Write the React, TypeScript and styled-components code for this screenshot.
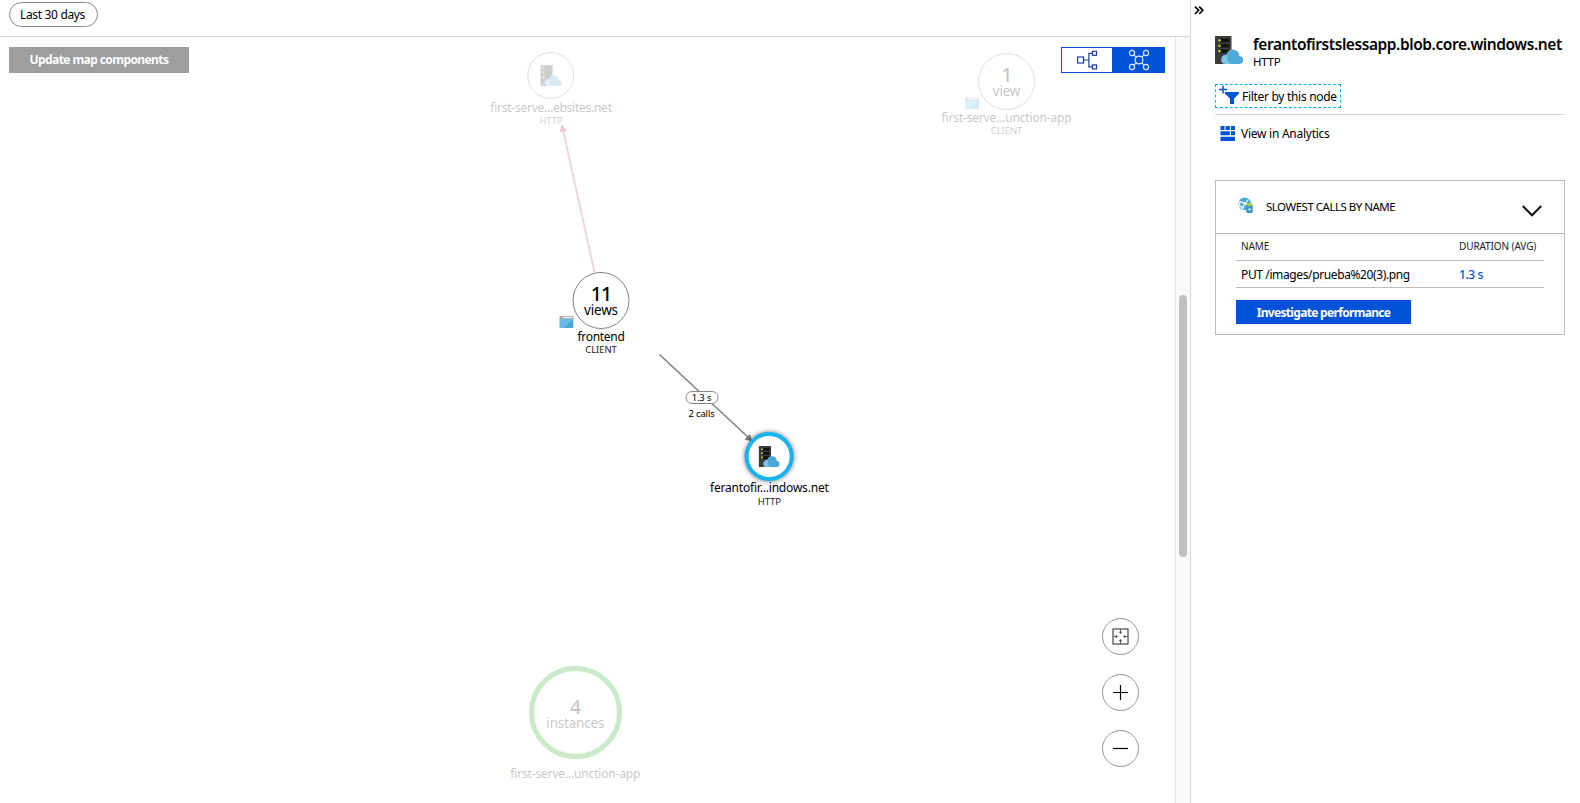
import React from "react";
import styled, { createGlobalStyle, css } from "styled-components";

const blue = "#0052d9";
const cyan = "#17b5f0";

const Global = createGlobalStyle`
  * { box-sizing: border-box; }
  body { margin: 0; background: #fff; overflow: hidden; }
`;

const Page = styled.div`
  display: flex;
  width: 1580px;
  height: 803px;
  overflow: hidden;
  color: #000;
  font: 12px/16px "Noto Sans", "Open Sans", sans-serif;
  letter-spacing: -0.3px;
  white-space: nowrap;
`;

const Main = styled.main`
  display: flex;
  flex-direction: column;
  width: 1190px;
`;

const TopBar = styled.header`
  height: 37px;
  padding: 2px 9px;
  border-bottom: 1px solid #d6d6d6;
`;

const TimePill = styled.button`
  display: block;
  width: 89px;
  height: 25px;
  padding: 0 2px 0 0;
  border: 1px solid #8a8a8a;
  border-radius: 13px;
  background: #fff;
  color: #000;
  font: inherit;
  letter-spacing: -0.33px;
`;

const Workspace = styled.div`
  display: flex;
  flex: 1;
  min-height: 0;
`;

const MapArea = styled.section`
  position: relative;
  display: flex;
  justify-content: space-between;
  align-items: flex-start;
  width: 1175px;
  padding: 10px 10px 0 9px;
`;

const SolidButton = styled.button<{ $bg: string; $w: number; $h: number; $ls: number; $drop?: number }>`
  display: block;
  width: ${(p) => p.$w}px;
  height: ${(p) => p.$h}px;
  padding: ${(p) => p.$drop ?? 0}px 0 0;
  border: 0;
  background: ${(p) => p.$bg};
  color: #fff;
  font: 700 12px/16px "Noto Sans", sans-serif;
  letter-spacing: ${(p) => p.$ls}px;
`;

const Toggle = styled.div`
  display: flex;
  width: 104px;
  height: 26px;
  border: 1px solid ${blue};
`;

const ToggleHalf = styled.button<{ $on?: boolean }>`
  width: ${(p) => (p.$on ? 52 : 50)}px;
  display: flex;
  align-items: center;
  justify-content: center;
  padding: 0 0 0 ${(p) => (p.$on ? 2 : 0)}px;
  border: 0;
  background: ${(p) => (p.$on ? blue : "#fff")};
`;

const Edges = styled.svg`
  position: absolute;
  inset: 0;
  pointer-events: none;
`;

const Node = styled.div<{ $x: number; $y: number; $dim?: boolean }>`
  position: absolute;
  left: ${(p) => p.$x}px;
  top: ${(p) => p.$y}px;
  transform: translateX(-50%);
  display: flex;
  flex-direction: column;
  align-items: center;
  opacity: ${(p) => (p.$dim ? 0.22 : 1)};
`;

const Circle = styled.div<{ $d: number; $border?: string; $glow?: boolean; $drop?: number }>`
  display: flex;
  flex-direction: column;
  align-items: center;
  justify-content: center;
  width: ${(p) => p.$d}px;
  height: ${(p) => p.$d}px;
  padding-top: ${(p) => p.$drop ?? 0}px;
  border: ${(p) => p.$border ?? "1px solid #707070"};
  border-radius: 50%;
  background: #fff;
  ${(p) => p.$glow && css`box-shadow: 0 0 5px rgba(0, 0, 0, 0.55);`}
`;

const Count = styled.div`
  font-size: 19.5px;
  line-height: 19px;
  letter-spacing: -0.8px;
  font-weight: 500;
`;

const Caption = styled.div`
  font-size: 13.5px;
  line-height: 15px;
  letter-spacing: -0.2px;
`;

const Label = styled.div<{ $gap?: number; $ls?: number }>`
  margin-top: ${(p) => p.$gap ?? 0}px;
  line-height: 15px;
  letter-spacing: ${(p) => p.$ls ?? -0.17}px;
`;

const Kind = styled.div<{ $gap?: number }>`
  margin-top: ${(p) => p.$gap ?? 0}px;
  font-size: 9.5px;
  line-height: 12px;
  letter-spacing: -0.1px;
  color: #222;
`;

const BrowserBadge = styled.svg<{ $x: number }>`
  position: absolute;
  left: ${(p) => p.$x}px;
  top: 44px;
`;

const EdgeInfo = styled.div`
  position: absolute;
  left: 701.5px;
  top: 354px;
  transform: translateX(-50%);
  display: flex;
  flex-direction: column;
  align-items: center;
  font-size: 9.5px;
  line-height: 11px;
  letter-spacing: -0.15px;
`;

const EdgePill = styled.div`
  width: 33px;
  height: 13px;
  margin-bottom: 4px;
  border: 1px solid #888;
  border-radius: 7px;
  background: #fff;
  text-align: center;
`;

const ZoomStack = styled.div`
  position: absolute;
  right: 36px;
  bottom: 36px;
  display: flex;
  flex-direction: column;
  gap: 19px;
`;

const RoundButton = styled.button`
  display: flex;
  align-items: center;
  justify-content: center;
  width: 37px;
  height: 37px;
  padding: 0;
  border: 1px solid #999;
  border-radius: 50%;
  background: #fff;
`;

const ScrollTrack = styled.div`
  width: 15px;
  padding: 258px 0 0 3px;
  border-left: 1px solid #e6e6e6;
  background: #fafafa;
`;

const ScrollThumb = styled.div`
  width: 8px;
  height: 262px;
  border-radius: 4px;
  background: #c1c1c1;
`;

const Panel = styled.aside`
  width: 390px;
  padding: 0 15px 0 24px;
  border-left: 1px solid #d6d6d6;
`;

const Collapse = styled.div`
  height: 34px;
  margin-left: -21px;
  padding-top: 6px;
  svg { display: block; }
`;

const Heading = styled.div`
  display: flex;
  gap: 10px;
  height: 50px;
  > svg { margin-top: 2px; }
`;

const Title = styled.h1`
  margin: 0;
  font-size: 15.5px;
  line-height: 20px;
  font-weight: 600;
  letter-spacing: -0.43px;
`;

const Subtitle = styled.div`
  font-size: 11.5px;
  line-height: 15px;
`;

const FilterRow = styled.div`
  height: 31px;
  border-bottom: 1px solid #d6d6d6;
`;

const FilterLink = styled.a`
  display: flex;
  align-items: flex-start;
  gap: 3px;
  width: 126px;
  height: 24px;
  padding-left: 3px;
  border: 1px dashed #10aeef;
  span { margin-top: 4px; }
`;

const AnalyticsLink = styled.a`
  display: flex;
  align-items: center;
  gap: 6px;
  height: 65px;
  padding: 0 0 28px 5px;
  letter-spacing: -0.26px;
`;

const Card = styled.section`
  height: 155px;
  border: 1px solid #bdbdbd;
`;

const CardHeader = styled.div`
  display: flex;
  align-items: center;
  height: 53px;
  padding: 0 22px;
  border-bottom: 1px solid #bdbdbd;
  > svg:first-child { margin-bottom: 4px; }
  > svg:last-child { margin-top: 7px; }
`;

const CardTitle = styled.div`
  flex: 1;
  margin-left: 12px;
  font-size: 11.5px;
  letter-spacing: -0.5px;
`;

const CardBody = styled.div`
  padding: 0 20px;
`;

const TableRow = styled.div<{ $head?: boolean }>`
  display: grid;
  grid-template-columns: 218px 1fr;
  align-items: center;
  height: 27px;
  padding: 2px 0 0 5px;
  border-bottom: 1px solid #bdbdbd;
  letter-spacing: -0.38px;
  ${(p) => p.$head && css`
    padding: 0 0 2px 5px;
    font-size: 10px;
    letter-spacing: -0.1px;
    color: #222;
  `}
`;

const Duration = styled.span`
  color: ${blue};
  font-weight: 500;
`;

const CardAction = styled.div`
  padding-top: 12px;
`;

const ServerIcon = ({ size }: { size: number }) => (
  <svg width={size} height={size} viewBox="0 0 28 28">
    <rect width="16.5" height="28" rx="0.8" fill="#3b3b3d" />
    {[2.6, 8, 13.4].map((y) => (
      <g key={y}>
        <rect x="2.6" y={y} width="12" height="3.6" rx="1.6" fill="#111" />
        <circle cx="4.4" cy={y + 1.8} r="1.4" fill="#b4d42a" />
      </g>
    ))}
    <path d="M10 28a4.6 4.6 0 0 1 .6-9.1 3.7 3.7 0 0 1 1-.7 6.5 6.5 0 0 1 12.700 1.800A4 4 0 0 1 24.100 28Z" fill="#4fa9d6" />
    <path d="M10 28a4.6 4.6 0 0 1 .6-9.1 3.700 3.700 0 0 1 2-.4C11.600 21.500 12.500 25.500 15.500 28Z" fill="#7cc4e4" />
  </svg>
);

const BrowserIcon = ({ x }: { x: number }) => (
  <BrowserBadge $x={x} width="14" height="12" viewBox="0 0 14 12">
    <rect width="14" height="12" fill="#4aa8d8" />
    <path d="M0 3h14L4 12H0Z" fill="#69bbe1" />
    <rect width="14" height="3" fill="#a4a7aa" />
    <rect x="3.5" y="0.8" width="9.5" height="1.4" fill="#f2f2f2" />
  </BrowserBadge>
);

const TreeIcon = () => (
  <svg width="22" height="20" viewBox="0 0 22 20" fill="none" stroke="#1b3fa6" strokeWidth="1.2">
    <rect x="1.6" y="7" width="6" height="6" />
    <path d="M7.6 10H12.9M16.5 3.3H12.9V16.9H16.5" />
    <rect x="16.5" y="1.3" width="4" height="4" />
    <rect x="16.5" y="14.9" width="4" height="4" />
  </svg>
);

const MeshIcon = () => (
  <svg width="22" height="22" viewBox="0 0 22 22" fill="none" stroke="#dfe9ff" strokeWidth="1.2">
    <circle cx="11" cy="11" r="3.9" />
    {[[4, 4], [18, 4], [4, 18], [18, 18]].map(([x, y]) => (
      <circle key={`${x}-${y}`} cx={x} cy={y} r="2.6" />
    ))}
    <path d="M5.9 5.9 8.2 8.2M16.1 5.9 13.8 8.2M5.9 16.1 8.2 13.8M16.1 16.1 13.8 13.8" />
  </svg>
);

const FitIcon = () => (
  <svg width="17" height="17" viewBox="0 0 17 17">
    <rect x="1" y="1" width="15" height="15" fill="none" stroke="#222" />
    <path d="M8.5 1v4M8.5 12v4M1 8.5h4M12 8.5h4" stroke="#666" />
    <path d="M6.8 3.8h3.4L8.5 6ZM6.8 13.2h3.4L8.5 11ZM3.8 6.8v3.4L6 8.5ZM13.2 6.8v3.4L11 8.5Z" fill="#444" />
  </svg>
);

const SignIcon = ({ plus }: { plus?: boolean }) => (
  <svg width="17" height="17" viewBox="0 0 17 17" stroke="#000" strokeWidth="1.2">
    <path d={plus ? "M1 8.5H16M8.5 1V16" : "M1 8.5H16"} />
  </svg>
);

const FilterIcon = () => (
  <svg width="20" height="20" viewBox="0 0 20 20">
    <path d="M4 0.5V8.5M0 4.5H8" stroke={blue} strokeWidth="1.5" />
    <path d="M5.8 7H20V8.5L15 13.5V19H11V13.5L5.8 8.500Z" fill={blue} />
  </svg>
);

const AnalyticsIcon = () => (
  <svg width="15" height="15" viewBox="0 0 15 15" fill={blue}>
    <path d="M0.500 0h4v4H0.500ZM5.600 0h4.200v4H5.600ZM10.900 0H15v4H10.900ZM0.500 5.300h9.300v4H0.500ZM10.900 5.300H15v4H10.900ZM0.500 10.800H15V15H0.500Z" />
  </svg>
);

const GlobeIcon = () => (
  <svg width="16" height="17" viewBox="0 0 16 17">
    <circle cx="6.8" cy="6.8" r="6.3" fill="#4da9d8" />
    <path d="M2 4.5 7 6.5 10.5 2.5M7 6.5 4.5 11M7 6.5 12 8M2 4.5 1.5 8.5 4.5 11" stroke="#fff" fill="none" strokeWidth="1.1" />
    <circle cx="7" cy="6.5" r="1.6" fill="#fff" />
    <circle cx="4.5" cy="10.8" r="1.3" fill="#e6f4fb" />
    <path d="M8.3 7.8h6.4v7.6q-3.2 1.6-6.4 0Z" fill="#3c93c6" />
    <ellipse cx="11.5" cy="7.6" rx="3.2" ry="1.3" fill="#b5d334" />
    <path d="M10 12.3h2.5M11.5 11l1.3 1.3-1.3 1.3" stroke="#e6f4fb" fill="none" />
  </svg>
);

export default function App() {
  return (
    <Page>
      <Global />
      <Main>
        <TopBar>
          <TimePill>Last 30 days</TimePill>
        </TopBar>
        <Workspace>
          <MapArea>
            <SolidButton $bg="#9e9e9e" $w={180} $h={26} $ls={-0.58}>Update map components</SolidButton>
            <Toggle>
              <ToggleHalf><TreeIcon /></ToggleHalf>
              <ToggleHalf $on><MeshIcon /></ToggleHalf>
            </Toggle>
            <Edges width="1175" height="766" viewBox="0 37 1175 766">
              <path d="M594.5 272 563 130" stroke="#f0d2d4" strokeWidth="1.7" />
              <path d="M561.5 124 559.8 132.3 567 131Z" fill="#eec8ca" />
              <path d="M659.5 354.5 750 439" stroke="#858585" strokeWidth="1.7" />
              <path d="M752.5 441.5 744.5 439.5 750 434Z" fill="#777" />
            </Edges>
            <Node $x={551} $y={15} $dim>
              <Circle $d={47}><ServerIcon size={21} /></Circle>
              <Label $gap={1} $ls={-0.25}>first-serve...ebsites.net</Label>
              <Kind>HTTP</Kind>
            </Node>
            <Node $x={1006.5} $y={16} $dim>
              <Circle $d={57}><Count>1</Count><Caption>view</Caption></Circle>
              <BrowserIcon x={23} />
              <Label>first-serve...unction-app</Label>
              <Kind>CLIENT</Kind>
            </Node>
            <Node $x={601} $y={235}>
              <Circle $d={57} $border="1px solid #808080"><Count>11</Count><Caption>views</Caption></Circle>
              <BrowserIcon x={-13} />
              <Label $ls={-0.3}>frontend</Label>
              <Kind>CLIENT</Kind>
            </Node>
            <EdgeInfo>
              <EdgePill>1.3 s</EdgePill>
              <div>2 calls</div>
            </EdgeInfo>
            <Node $x={769.3} $y={395}>
              <Circle $d={49} $border={`4px solid ${cyan}`} $glow><ServerIcon size={21} /></Circle>
              <Label $gap={-1} $ls={-0.19}>ferantofir...indows.net</Label>
              <Kind $gap={1}>HTTP</Kind>
            </Node>
            <Node $x={575.3} $y={629} $dim>
              <Circle $d={93} $border="5px solid #14a514" $drop={2}><Count>4</Count><Caption>instances</Caption></Circle>
              <Label $gap={7}>first-serve...unction-app</Label>
            </Node>
            <ZoomStack>
              <RoundButton><FitIcon /></RoundButton>
              <RoundButton><SignIcon plus /></RoundButton>
              <RoundButton><SignIcon /></RoundButton>
            </ZoomStack>
          </MapArea>
          <ScrollTrack><ScrollThumb /></ScrollTrack>
        </Workspace>
      </Main>
      <Panel>
        <Collapse>
          <svg width="10" height="9" viewBox="0 0 10 9" fill="none" stroke="#000" strokeWidth="1.7">
            <path d="M1 0.6 4.6 4.3 1 8M5.2 0.6 8.8 4.3 5.2 8" />
          </svg>
        </Collapse>
        <Heading>
          <ServerIcon size={28} />
          <div>
            <Title>ferantofirstslessapp.blob.core.windows.net</Title>
            <Subtitle>HTTP</Subtitle>
          </div>
        </Heading>
        <FilterRow>
          <FilterLink><FilterIcon /><span>Filter by this node</span></FilterLink>
        </FilterRow>
        <AnalyticsLink><AnalyticsIcon />View in Analytics</AnalyticsLink>
        <Card>
          <CardHeader>
            <GlobeIcon />
            <CardTitle>SLOWEST CALLS BY NAME</CardTitle>
            <svg width="20" height="12" viewBox="0 0 20 12" fill="none" stroke="#111" strokeWidth="2">
              <path d="M0.8 1 10 10.3 19.2 1" />
            </svg>
          </CardHeader>
          <CardBody>
            <TableRow $head><span>NAME</span><span>DURATION (AVG)</span></TableRow>
            <TableRow><span>PUT /images/prueba%20(3).png</span><Duration>1.3 s</Duration></TableRow>
            <CardAction>
              <SolidButton $bg={blue} $w={175} $h={24} $ls={-0.68} $drop={2}>Investigate performance</SolidButton>
            </CardAction>
          </CardBody>
        </Card>
      </Panel>
    </Page>
  );
}
